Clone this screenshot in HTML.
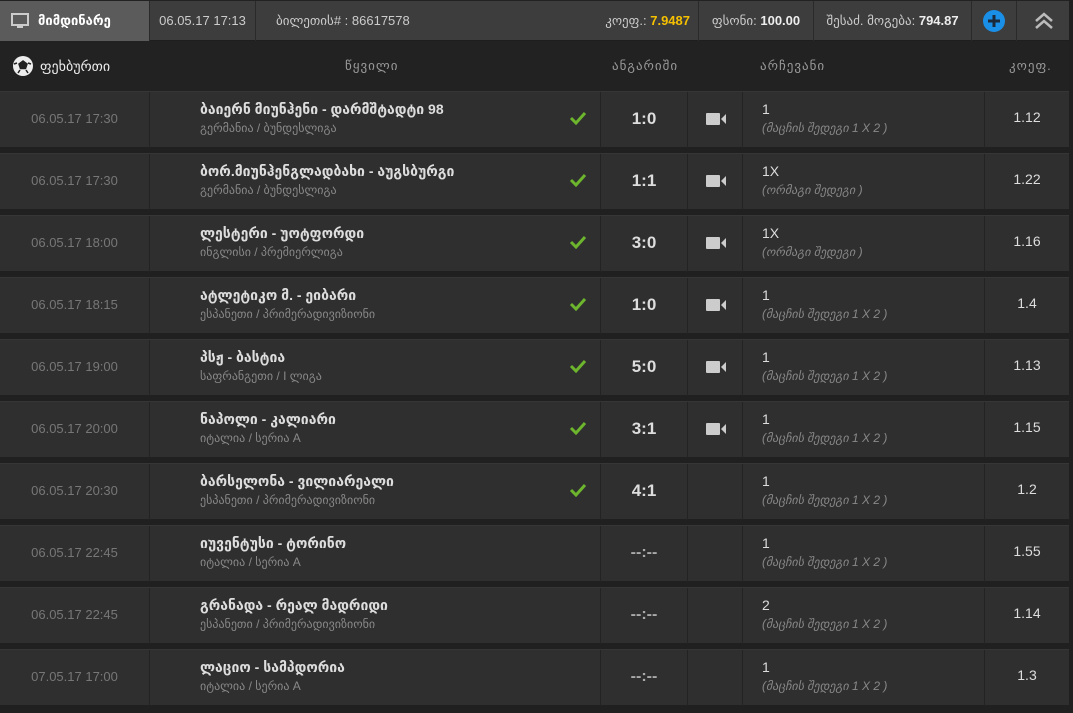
<!DOCTYPE html>
<html><head><meta charset="utf-8"><style>
*{box-sizing:border-box;margin:0;padding:0}
body{width:1073px;height:713px;background:#202020;font-family:"Liberation Sans","DejaVu Sans",sans-serif;overflow:hidden;position:relative}
.top{position:absolute;left:0;top:0;width:1069px;height:41px;background:#3d3d3d;border-top:1px solid #222;border-bottom:1px solid #1e1e1e}
.tc{position:absolute;top:0;height:40px;border-right:1px solid #2a2a2a;color:#ccc;font-size:13px;line-height:40px;white-space:nowrap}
.hdr{position:absolute;left:0;top:41px;width:1069px;height:50px;background:#222}
.h{position:absolute;top:17px;color:#999;font-size:13px;letter-spacing:1px}
.row{position:absolute;left:0;width:1069px;height:56px;background:#2f2f2f;border-top:1px solid #363636}
.c{position:absolute;top:0;height:56px;border-right:1px solid #232323}
.date{color:#777;font-size:13px;text-align:center;line-height:53px;width:150px;left:0}
.m{left:150px;width:451px}
.tn{position:absolute;left:50px;top:9px;color:#ddd;font-size:14px;font-weight:bold;white-space:nowrap}
.lg{position:absolute;left:50px;top:29px;color:#888;font-size:12px;white-space:nowrap}
.sc{left:601px;width:87px;color:#ddd;font-size:17px;font-weight:bold;text-align:center;line-height:53px}
.cam{left:688px;width:55px}
.pk{left:743px;width:242px}
.p1{position:absolute;left:19px;top:9px;color:#ddd;font-size:14px}
.p2{position:absolute;left:19px;top:29px;color:#888;font-size:12px;font-style:italic}
.cf{left:985px;width:84px;border-right:none;color:#ddd;font-size:14px;text-align:center;line-height:51px}
.chk{position:absolute;left:419px;top:19px}
.camsvg{position:absolute;left:18px;top:20px}
</style></head><body>
<div class="top">
<div class="tc" style="left:0;width:150px;background:#5b5b5b;color:#fff;font-weight:bold">
<svg style="position:absolute;left:11px;top:12px" width="18" height="16" viewBox="0 0 18 16"><rect x="1" y="1" width="16" height="11" fill="none" stroke="#ccc" stroke-width="2"/><rect x="6" y="13" width="6" height="2" fill="#ccc"/></svg>
<span style="position:absolute;left:38px">მიმდინარე</span></div>
<div class="tc" style="left:150px;width:106px;text-align:center">06.05.17 17:13</div>
<div class="tc" style="left:256px;width:443px;padding-left:20px">ბილეთის# : 86617578
<span style="position:absolute;right:8px">კოეფ.: <b style="color:#f5c000">7.9487</b></span></div>
<div class="tc" style="left:699px;width:115px;text-align:center">ფსონი: <b style="color:#eee">100.00</b></div>
<div class="tc" style="left:814px;width:158px;text-align:center">შესაძ. მოგება: <b style="color:#eee">794.87</b></div>
<div class="tc" style="left:972px;width:45px"><svg style="position:absolute;left:11px;top:9px" width="22" height="22" viewBox="0 0 22 22"><circle cx="11" cy="11" r="11" fill="#1a8fe8"/><path d="M11 5v12M5 11h12" stroke="#1a2a3a" stroke-width="3"/></svg></div>
<div class="tc" style="left:1017px;width:52px;border-right:none"><svg style="position:absolute;left:17px;top:11px" width="20" height="18" viewBox="0 0 20 18"><path d="M2 9l8-7 8 7M2 16l8-7 8 7" fill="none" stroke="#bbb" stroke-width="2.5"/></svg></div>
</div>
<div class="hdr">
<svg style="position:absolute;left:12px;top:14px" width="22" height="22" viewBox="0 0 22 22"><circle cx="11" cy="11" r="10" fill="#eee"/><path d="M11 6l4 3-1.5 4.5h-5L7 9z M2 9l3-1 M19 9l-3-1 M6 18l2-3 M16 18l-2-3" fill="#222" stroke="#222" stroke-width="1.5"/></svg>
<div class="h" style="left:40px;color:#eee;font-size:14px;letter-spacing:0">ფეხბურთი</div>
<div class="h" style="left:345px">წყვილი</div>
<div class="h" style="left:612px">ანგარიში</div>
<div class="h" style="left:760px">არჩევანი</div>
<div class="h" style="left:1009px">კოეფ.</div>
</div>
<div id="rows"></div>
<script>
var d=[["06.05.17 17:30","ბაიერნ მიუნჰენი - დარმშტადტი 98","გერმანია / ბუნდესლიგა","1:0",1,"1","(მაცჩის შედეგი 1 X 2 )","1.12"],
["06.05.17 17:30","ბორ.მიუნჰენგლადბახი - აუგსბურგი","გერმანია / ბუნდესლიგა","1:1",1,"1X","(ორმაგი შედეგი )","1.22"],
["06.05.17 18:00","ლესტერი - უოტფორდი","ინგლისი / პრემიერლიგა","3:0",1,"1X","(ორმაგი შედეგი )","1.16"],
["06.05.17 18:15","ატლეტიკო მ. - ეიბარი","ესპანეთი / პრიმერადივიზიონი","1:0",1,"1","(მაცჩის შედეგი 1 X 2 )","1.4"],
["06.05.17 19:00","პსჟ - ბასტია","საფრანგეთი / I ლიგა","5:0",1,"1","(მაცჩის შედეგი 1 X 2 )","1.13"],
["06.05.17 20:00","ნაპოლი - კალიარი","იტალია / სერია A","3:1",1,"1","(მაცჩის შედეგი 1 X 2 )","1.15"],
["06.05.17 20:30","ბარსელონა - ვილიარეალი","ესპანეთი / პრიმერადივიზიონი","4:1",2,"1","(მაცჩის შედეგი 1 X 2 )","1.2"],
["06.05.17 22:45","იუვენტუსი - ტორინო","იტალია / სერია A","--:--",0,"1","(მაცჩის შედეგი 1 X 2 )","1.55"],
["06.05.17 22:45","გრანადა - რეალ მადრიდი","ესპანეთი / პრიმერადივიზიონი","--:--",0,"2","(მაცჩის შედეგი 1 X 2 )","1.14"],
["07.05.17 17:00","ლაციო - სამპდორია","იტალია / სერია A","--:--",0,"1","(მაცჩის შედეგი 1 X 2 )","1.3"]];
var h="";
d.forEach(function(r,i){
var chk=r[4]?'<svg class="chk" width="18" height="14" viewBox="0 0 18 14"><path d="M2 7l5 5 9-10" fill="none" stroke="#6cb52d" stroke-width="3"/></svg>':'';
var cam=r[4]==1?'<svg class="camsvg" width="20" height="14" viewBox="0 0 20 14"><rect x="0" y="1" width="14" height="12" rx="1" fill="#ccc"/><path d="M15 7l5-5v10z" fill="#ccc"/></svg>':'';
var sc=r[3]=="--:--"?'color:#aaa;font-size:16px':'';
h+='<div class="row" style="top:'+(91+62*i)+'px"><div class="c date">'+r[0]+'</div><div class="c m"><div class="tn">'+r[1]+'</div><div class="lg">'+r[2]+'</div>'+chk+'</div><div class="c sc" style="'+sc+'">'+r[3]+'</div><div class="c cam">'+cam+'</div><div class="c pk"><div class="p1">'+r[5]+'</div><div class="p2">'+r[6]+'</div></div><div class="c cf">'+r[7]+'</div></div>';
});
document.getElementById("rows").innerHTML=h;
</script>
</body></html>
